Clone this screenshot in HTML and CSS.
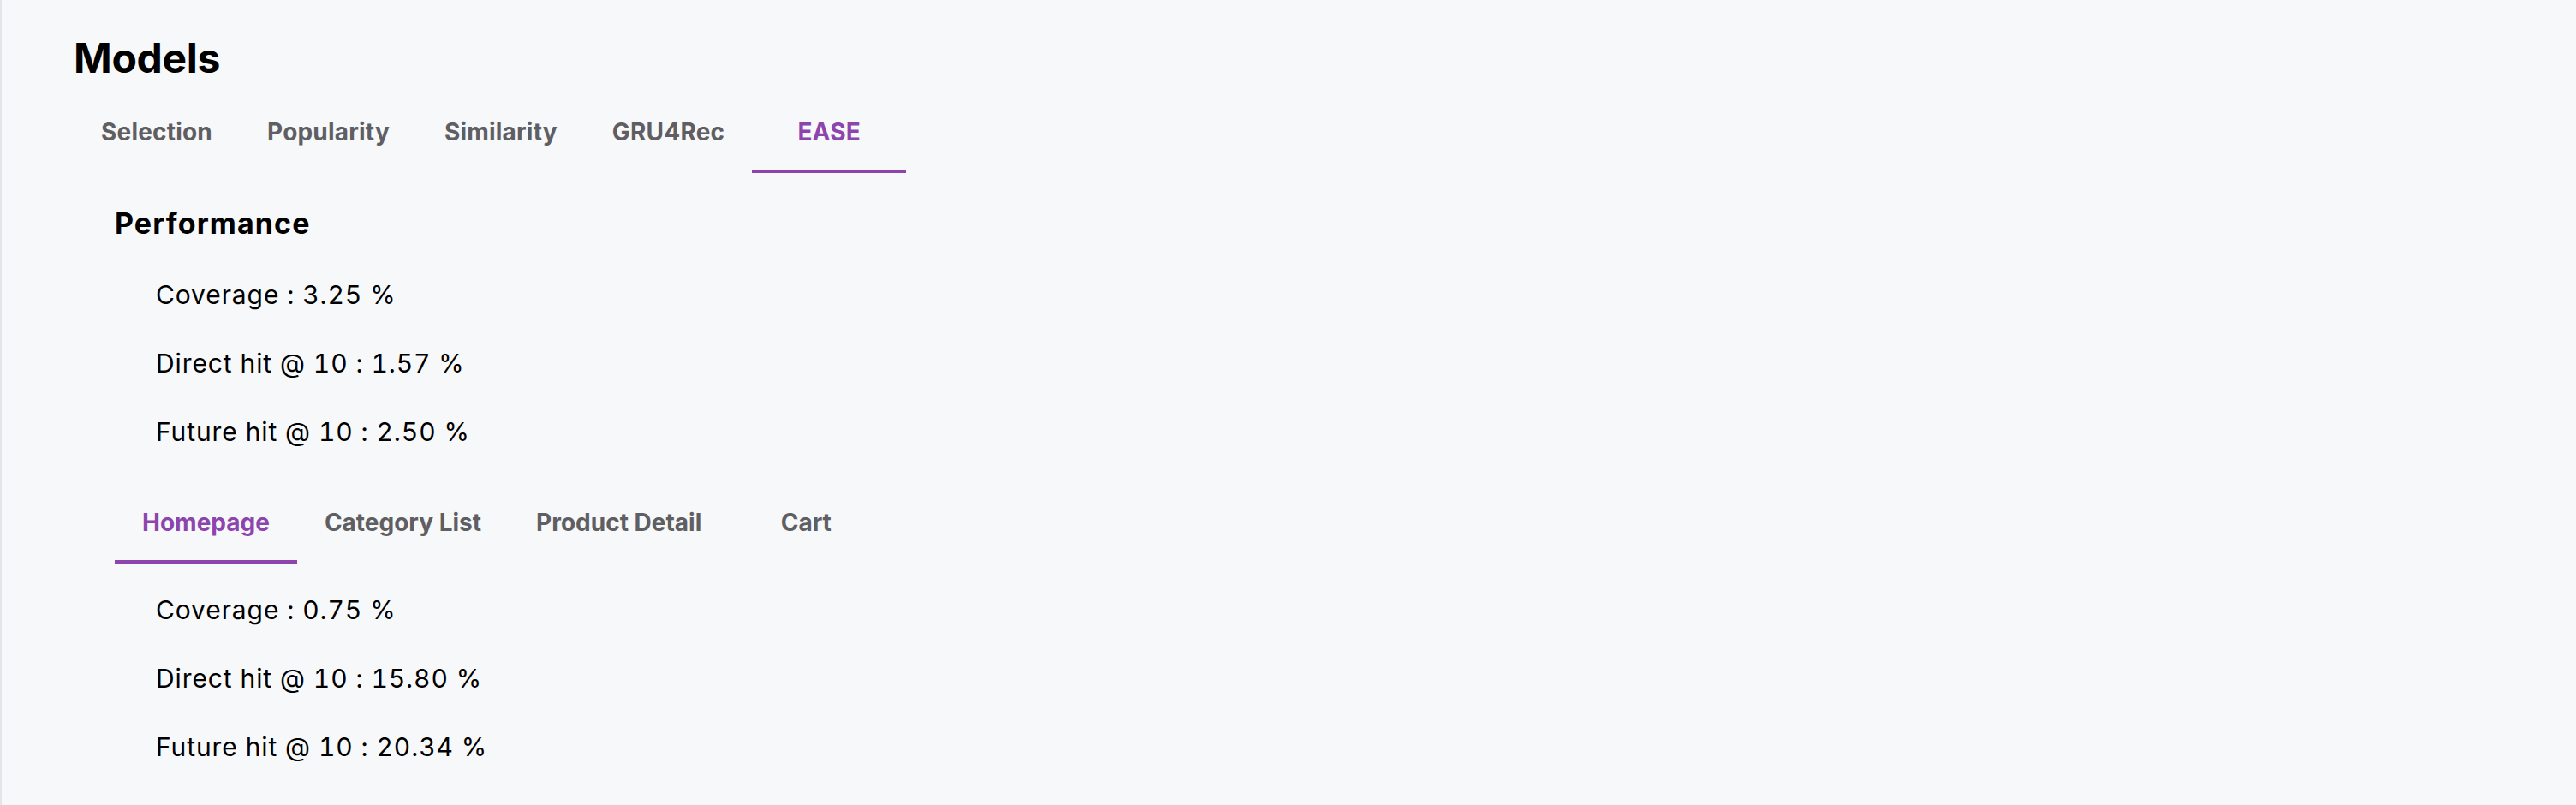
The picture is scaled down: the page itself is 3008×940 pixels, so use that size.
FILE: index.html
```html
<!DOCTYPE html>
<html lang="en">
<head>
<meta charset="utf-8">
<title>Models</title>
<link rel="stylesheet" href="styles.css">
</head>
<body>
<div class="page">
  <h1 class="title">Models</h1>
  <div class="tabs">
    <div class="tab">Selection</div>
    <div class="tab">Popularity</div>
    <div class="tab">Similarity</div>
    <div class="tab">GRU4Rec</div>
    <div class="tab active">EASE</div>
  </div>
  <div class="panel">
    <h3 class="section-title">Performance</h3>
    <div class="metrics">
      <div class="metric">Coverage : 3.25 %</div>
      <div class="metric">Direct hit @ 10 : 1.57 %</div>
      <div class="metric">Future hit @ 10 : 2.50 %</div>
    </div>
    <div class="tabs subtabs">
      <div class="tab active">Homepage</div>
      <div class="tab">Category List</div>
      <div class="tab">Product Detail</div>
      <div class="tab">Cart</div>
    </div>
    <div class="metrics sub-metrics">
      <div class="metric">Coverage : 0.75 %</div>
      <div class="metric">Direct hit @ 10 : 15.80 %</div>
      <div class="metric">Future hit @ 10 : 20.34 %</div>
    </div>
  </div>
</div>
</body>
</html>
```
FILE: styles.css
```css
html, body {
  margin: 0;
  height: 100%;
}
body {
  background: #f7f8fa;
  border-left: 2px solid #e4e5e9;
  box-sizing: border-box;
  font-family: Inter, "Liberation Sans", sans-serif;
  color: #000;
}
.page {
  padding: 40px 0 0 84px;
}
.title {
  margin: 0;
  font-size: 48px;
  line-height: 56px;
  font-weight: 700;
  letter-spacing: -0.3px;
}
.tabs {
  display: flex;
  margin-top: 10px;
}
.tab {
  min-width: 180px;
  height: 96px;
  padding: 0 32px;
  box-sizing: border-box;
  display: flex;
  align-items: center;
  justify-content: center;
  font-size: 28px;
  font-weight: 700;
  letter-spacing: 0.2px;
  color: #5f5f63;
  white-space: nowrap;
}
.tab.active {
  color: #8e44ad;
  box-shadow: inset 0 -4px 0 #8e44ad;
}
.panel {
  padding: 38px 0 0 48px;
}
.section-title {
  margin: 0;
  font-size: 34px;
  line-height: 42px;
  font-weight: 700;
  letter-spacing: 1.1px;
}
.metrics {
  margin-top: 22px;
  padding-left: 48px;
}
.metric {
  font-size: 30px;
  line-height: 80px;
  letter-spacing: 0.9px;
  font-variant-numeric: tabular-nums;
}
.subtabs {
  margin-top: 18px;
}
.subtabs .tab {
  letter-spacing: 0;
}
.sub-metrics {
  margin-top: 14px;
}
```
